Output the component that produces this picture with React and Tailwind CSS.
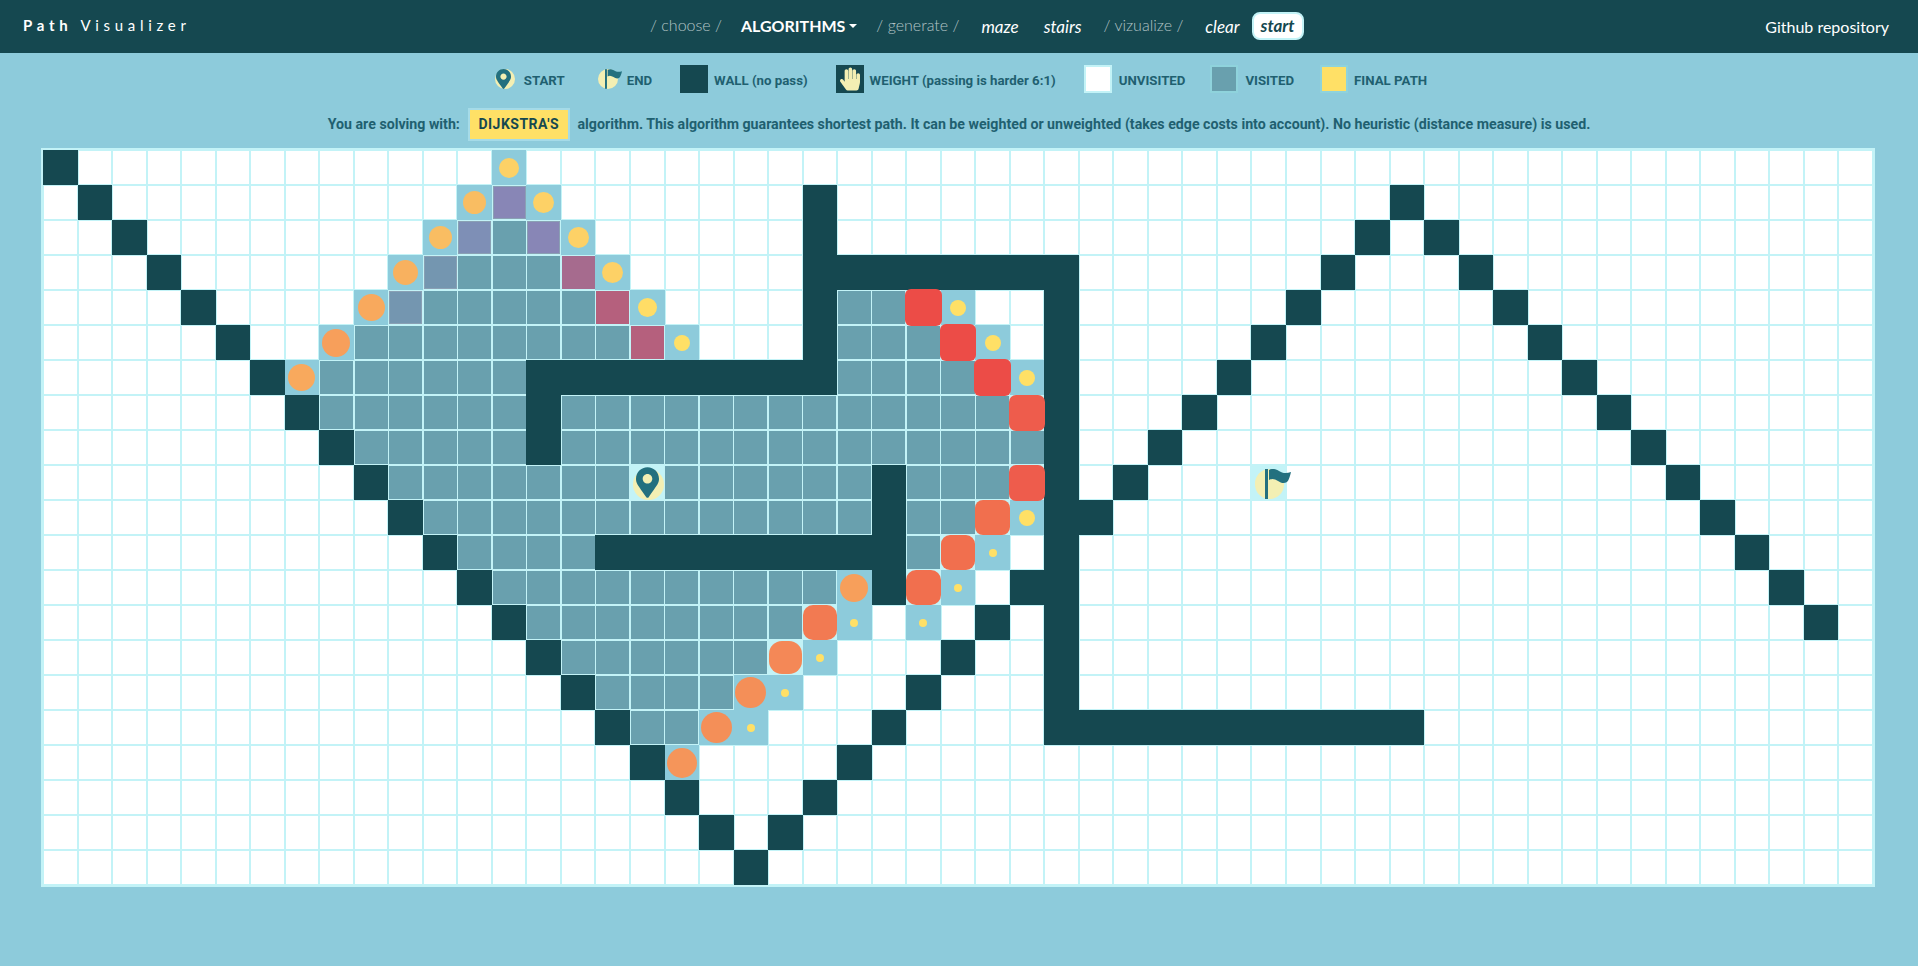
import { FaMapMarkerAlt, FaHandPaper } from "react-icons/fa";

const ROWS = 21;
const COLS = 53;

// every special cell is listed as row -> columns
const range = (a, b) => {
  const out = [];
  for (let i = a; i <= b; i++) out.push(i);
  return out;
};

const walls = {
  0: [0],
  1: [1, 22, 39],
  2: [2, 22, 38, 40],
  3: [3, ...range(22, 29), 37, 41],
  4: [4, 22, 29, 36, 42],
  5: [5, 22, 29, 35, 43],
  6: [6, ...range(14, 22), 29, 34, 44],
  7: [7, 14, 29, 33, 45],
  8: [8, 14, 29, 32, 46],
  9: [9, 24, 29, 31, 47],
  10: [10, 24, 29, 30, 48],
  11: [11, ...range(16, 24), 29, 49],
  12: [12, 24, 28, 29, 50],
  13: [13, 27, 29, 51],
  14: [14, 26, 29],
  15: [15, 25, 29],
  16: [16, 24, ...range(29, 39)],
  17: [17, 23],
  18: [18, 22],
  19: [19, 21],
  20: [20],
};

const visited = {
  2: [13],
  3: [12, 13, 14],
  4: range(11, 15).concat([23, 24]),
  5: range(9, 16).concat([23, 24, 25]),
  6: range(8, 13).concat(range(23, 26)),
  7: range(8, 13).concat(range(15, 27)),
  8: range(9, 13).concat(range(15, 28)),
  9: range(10, 16).concat(range(18, 23), [25, 26, 27]),
  10: range(11, 23).concat([25, 26]),
  11: range(12, 15).concat([25]),
  12: range(13, 22),
  13: range(14, 21),
  14: range(15, 20),
  15: range(16, 19),
  16: [17, 18],
};

// cells caught in the middle of the visit animation
const tinted = [
  [1, 13, "bg-[#8886b6] border border-[#8aa0b4]"],
  [2, 12, "bg-[#7e8fb6] border border-[#8aa0b4]"],
  [2, 14, "bg-[#8886b6] border border-[#8aa0b4]"],
  [3, 11, "bg-[#7496b0] border border-[#8aa0b4]"],
  [3, 15, "bg-[#a66b8e]"],
  [4, 10, "bg-[#7496b0] border border-[#8aa0b4]"],
  [4, 16, "bg-[#b5607d]"],
  [5, 17, "bg-[#b5607d]"],
];

const rounded = [
  [4, 25, "-m-[2px] rounded-[6px] bg-[#ec4c47]"],
  [5, 26, "-m-[2px] rounded-[6px] bg-[#ec4c47]"],
  [6, 27, "-m-[2px] rounded-[6px] bg-[#ec4c47]"],
  [7, 28, "-m-[1.5px] rounded-[7px] bg-[#ee5c4c]"],
  [9, 28, "-m-[1.5px] rounded-[7px] bg-[#ee5c4c]"],
  [10, 27, "-m-px rounded-[8px] bg-[#f16f4e]"],
  [11, 26, "-m-px rounded-[9px] bg-[#f16f4e]"],
  [12, 25, "-m-px rounded-[10px] bg-[#f16f4e]"],
  [13, 22, "-m-px rounded-[10px] bg-[#f27a52]"],
  [14, 21, "rounded-[13px] bg-[#f48857]"],
];

// frontier circles: [row, col, colour and size]
const circles = [
  [0, 13, "bg-[#fdd166] w-[20px] h-[20px]"],
  [1, 12, "bg-[#f9bd62] w-[23px] h-[23px]"],
  [1, 14, "bg-[#fdd166] w-[21px] h-[21px]"],
  [2, 11, "bg-[#f9bd62] w-[23px] h-[23px]"],
  [2, 15, "bg-[#fdd166] w-[21px] h-[21px]"],
  [3, 10, "bg-[#f8b15f] w-[25px] h-[25px]"],
  [3, 16, "bg-[#fdd166] w-[21px] h-[21px]"],
  [4, 9, "bg-[#f8a95d] w-[27px] h-[27px]"],
  [4, 17, "bg-[#ffdd66] w-[19px] h-[19px]"],
  [5, 8, "bg-[#f79f5b] w-[28px] h-[28px]"],
  [5, 18, "bg-[#ffe066] w-[16px] h-[16px]"],
  [6, 7, "bg-[#f8a95d] w-[27px] h-[27px]"],
  [4, 26, "bg-[#ffe066] w-[16px] h-[16px]"],
  [5, 27, "bg-[#ffe066] w-[16px] h-[16px]"],
  [6, 28, "bg-[#ffe066] w-[16px] h-[16px]"],
  [10, 28, "bg-[#ffe066] w-[16px] h-[16px]"],
  [11, 27, "bg-[#ffe066] w-[8px] h-[8px]"],
  [12, 26, "bg-[#ffe066] w-[8px] h-[8px]"],
  [13, 23, "bg-[#ffe066] w-[8px] h-[8px]"],
  [13, 25, "bg-[#ffe066] w-[8px] h-[8px]"],
  [14, 22, "bg-[#ffe066] w-[8px] h-[8px]"],
  [15, 21, "bg-[#ffe066] w-[8px] h-[8px]"],
  [16, 20, "bg-[#ffe066] w-[8px] h-[8px]"],
  [12, 23, "bg-[#f79f5b] w-[28px] h-[28px]"],
  [15, 20, "bg-[#f48f58] w-[31px] h-[31px]"],
  [16, 19, "bg-[#f48f58] w-[31px] h-[31px]"],
  [17, 18, "bg-[#f5955a] w-[30px] h-[30px]"],
];

function FlagIcon({ className }) {
  return (
    <svg viewBox="0 0 26 30" className={className} fill="#23707f">
      <rect x="0" y="0" width="3" height="30" />
      <path d="M4 1c3-2 7-1 10 1s7 3 12 1c-1 4-2 8-4 10-3 2-6 1-9-1s-6-3-9-1z" />
    </svg>
  );
}

function Cell({ row, col }) {
  if (walls[row]?.includes(col)) {
    return <div className="-m-px bg-[#154850]" />;
  }
  if (visited[row]?.includes(col)) {
    return <div className="-mx-[0.25px] bg-[#69a0ae]" />;
  }
  const tint = tinted.find((t) => t[0] === row && t[1] === col);
  if (tint) {
    return <div className={`-mx-[0.25px] ${tint[2]}`} />;
  }
  const block = rounded.find((t) => t[0] === row && t[1] === col);
  if (block) {
    return <div className={`z-10 ${block[2]}`} />;
  }
  const circle = circles.find((t) => t[0] === row && t[1] === col);
  if (circle) {
    return (
      <div className="-m-px bg-[#8dcbdb] flex items-center justify-center">
        <span className={`block shrink-0 rounded-full ${circle[2]}`} />
      </div>
    );
  }
  if (row === 9 && col === 17) {
    return (
      <div className="-m-px bg-[#c3f3f7] flex items-center justify-center relative">
        <span className="block w-[31px] h-[31px] ml-[3px] mt-[3px] rounded-full bg-[#f3efb3]" />
        <FaMapMarkerAlt className="absolute top-[2px] left-[6px] text-[#23707f] w-[23px] h-[31px]" />
      </div>
    );
  }
  if (row === 9 && col === 35) {
    return (
      <div className="-m-px bg-[#c3f3f7] flex items-center justify-center relative">
        <span className="block w-[29px] h-[30px] ml-[2px] mt-[2px] rounded-full bg-[#f3efb3]" />
        <FlagIcon className="absolute top-[4px] left-[14px] w-[26px] h-[30px]" />
      </div>
    );
  }
  return <div className="bg-white" />;
}

function Grid() {
  const cells = [];
  for (let r = 0; r < ROWS; r++) {
    for (let c = 0; c < COLS; c++) {
      cells.push(<Cell key={`${r}-${c}`} row={r} col={c} />);
    }
  }
  return (
    <div className="mx-[41px] w-[1834px] grid grid-cols-[repeat(53,1fr)] grid-rows-[repeat(21,33px)] gap-[2px] p-[3px] bg-[#c3f3f7]">
      {cells}
    </div>
  );
}

function NavNote({ children }) {
  return <span className="block pb-[3px] text-[16px] text-[#b3c4c6] font-light">{children}</span>;
}

function NavLink({ children }) {
  return <span className="text-[17px] italic text-white">{children}</span>;
}

function LegendLabel({ children }) {
  return <span className="text-[13.25px] font-bold text-[#1f6070] font-['Roboto',sans-serif]">{children}</span>;
}

function InfoText({ children }) {
  return <span className="text-[14.2px] font-bold text-[#1f6070] font-['Roboto',sans-serif]">{children}</span>;
}

export default function App() {
  return (
    <div className="min-h-[966px] bg-[#8dcbdb] font-['Lato',sans-serif]">
      <nav className="h-[53px] bg-[#154850] flex items-center pl-[23px] pr-[29px] text-white">
        <div className="w-[600px] shrink-0 text-[15px] tracking-[4.7px] pb-[2px]">
          <b>Path</b> <span>Visualizer</span>
        </div>
        <div className="flex items-center">
          <span className="ml-[27px]"><NavNote>/ choose /</NavNote></span>
          <span className="ml-[19px] pb-[2px] text-[16px] font-bold flex items-center gap-[4px]">
            ALGORITHMS
            <span className="w-0 h-0 border-x-[4px] border-x-transparent border-t-[4px] border-t-white" />
          </span>
          <span className="ml-[19px]"><NavNote>/ generate /</NavNote></span>
          <span className="ml-[22px]"><NavLink>maze</NavLink></span>
          <span className="ml-[25px]"><NavLink>stairs</NavLink></span>
          <span className="ml-[22px]"><NavNote>/ vizualize /</NavNote></span>
          <span className="ml-[22px]"><NavLink>clear</NavLink></span>
          <span className="ml-[12px] mb-[1px] w-[52px] h-[28px] flex items-center justify-center rounded-lg bg-white border-2 border-[#c3f3f7] text-[17px] italic font-bold text-[#154850]">
            start
          </span>
        </div>
        <span className="ml-auto text-[16px]">Github repository</span>
      </nav>

      <div className="h-[28px] mt-[13px] pl-[4px] flex items-center justify-center -translate-y-px">
        <span className="w-[20px] h-[20px] rounded-full bg-[#f3efb3] flex items-center justify-center">
          <FaMapMarkerAlt className="-ml-[3px] text-[#23707f] w-[15px] h-[20px]" />
        </span>
        <span className="ml-[9px]"><LegendLabel>START</LegendLabel></span>
        <span className="ml-[33px] relative w-[20px] h-[20px] rounded-full bg-[#f3efb3]">
          <FlagIcon className="absolute left-[7px] top-0 w-[17px] h-[20px]" />
        </span>
        <span className="ml-[9px]"><LegendLabel>END</LegendLabel></span>
        <span className="ml-[28px] w-[28px] h-[28px] bg-[#154850]" />
        <span className="ml-[6px]"><LegendLabel>WALL (no pass)</LegendLabel></span>
        <span className="ml-[28px] w-[28px] h-[28px] bg-[#154850] flex items-center justify-center">
          <FaHandPaper className="text-[#f3efb3] w-[20px] h-[24px]" />
        </span>
        <span className="ml-[6px]"><LegendLabel>WEIGHT (passing is harder 6:1)</LegendLabel></span>
        <span className="ml-[28px] w-[28px] h-[28px] bg-white border-2 border-[#c3f3f7]" />
        <span className="ml-[7px]"><LegendLabel>UNVISITED</LegendLabel></span>
        <span className="ml-[25px] w-[28px] h-[28px] bg-[#69a0ae] border-2 border-[#8fd3dc]" />
        <span className="ml-[7px]"><LegendLabel>VISITED</LegendLabel></span>
        <span className="ml-[26px] w-[28px] h-[28px] bg-[#ffe066] border-2 border-[#8fd3dc]" />
        <span className="ml-[6px]"><LegendLabel>FINAL PATH</LegendLabel></span>
      </div>

      <div className="h-[33px] mt-[14px] mb-[7px] flex items-center justify-center">
        <InfoText>You are solving with:</InfoText>
        <span className="mx-[8px] h-[33px] px-[8.5px] flex items-center bg-[#ffe066] border-2 border-[#a5dbe8] text-[14px] tracking-[0.5px] font-bold text-[#154850] font-['Roboto',sans-serif]">
          DIJKSTRA'S
        </span>
        <InfoText>
          algorithm. This algorithm guarantees shortest path. It can be weighted or unweighted (takes edge costs into account). No heuristic (distance measure) is used.
        </InfoText>
      </div>

      <Grid />
    </div>
  );
}
